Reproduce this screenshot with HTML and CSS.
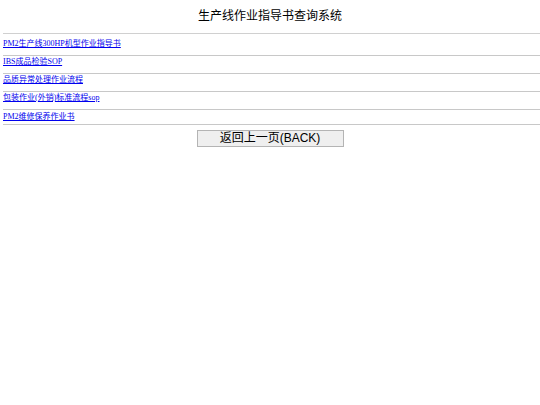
FILE: index.html
```html
<!DOCTYPE html>
<html lang="zh-CN">
<head>
    <meta charset="UTF-8">
    <meta name="viewport" content="width=device-width, initial-scale=1.0">
    <title>作业指导书</title>
    <link rel="stylesheet" href="styles.css">
</head>
<body>
    <div class="title">生产线作业指导书查询系统</div>
    <div class="list">
        <div class="row first"><a href="#">PM2生产线300HP机型作业指导书</a></div>
        <div class="row"><a href="#">IBS成品检验SOP</a></div>
        <div class="row"><a href="#">品质异常处理作业流程</a></div>
        <div class="row"><a href="#">包装作业(外销)标准流程sop</a></div>
        <div class="row last"><a href="#">PM2维修保养作业书</a></div>
    </div>
    <div class="back">
        <button type="button" class="btn-back">返回上一页(BACK)</button>
    </div>
</body>
</html>
```

FILE: styles.css
```css
body {
    margin: 0 0 0 3px;
    font-family: "Liberation Serif", "Noto Sans CJK SC", serif;
    background-color: #fff;
}
div.title {
    text-align: center;
    font-size: 12px;
    line-height: 14px;
    padding-top: 9px;
    padding-bottom: 10px;
    padding-right: 3px;
    border-bottom: 1px solid #d0d0d0;
}
div.list div.row {
    padding: 2px 0 7px 0;
    font-size: 8px;
    line-height: 8px;
    border-bottom: 1px solid #c8c8c8;
}
div.list div.row.first {
    padding-top: 6px;
}
div.list div.row.last {
    padding: 3px 0 3px 0;
}
div.list div.row a {
    color: #0000ee;
}
div.back {
    text-align: center;
    padding-top: 3px;
    padding-right: 3px;
}
.btn-back {
    width: 147px;
    height: 17px;
    padding: 0;
    font-family: "Liberation Sans", "Noto Sans CJK SC", sans-serif;
    font-size: 12px;
    line-height: 15px;
    color: #000;
    background-color: #efefef;
    border: 1px solid #b4b4b4;
}
```
